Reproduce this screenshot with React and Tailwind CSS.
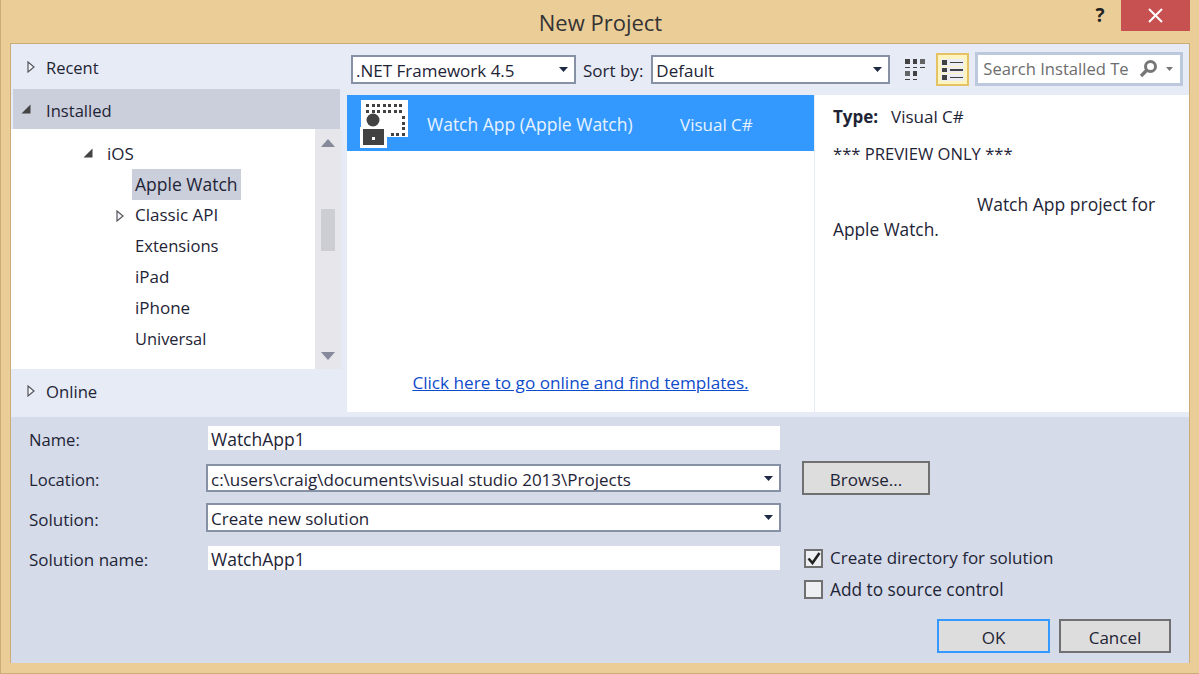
import React from "react";

const Expand = ({ className = "" }) => (
  <svg width="8" height="12" viewBox="0 0 8 12" className={className}>
    <path d="M1 1 L7 6 L1 11 Z" fill="#f4f6fb" stroke="#55565c" strokeWidth="1.2" />
  </svg>
);
const Collapse = ({ className = "" }) => (
  <svg width="10" height="10" viewBox="0 0 10 10" className={className}>
    <path d="M9.5 0.5 V9.5 H0.5 Z" fill="#444" />
  </svg>
);
const Caret = ({ className = "" }) => (
  <svg width="9" height="5" viewBox="0 0 9 5" className={className}>
    <path d="M0 0 H9 L4.5 5 Z" fill="#1e2a44" />
  </svg>
);

const TemplateIcon = () => {
  const xs = [6, 12, 17, 23, 28, 34, 39];
  const top = [];
  xs.forEach((x) => {
    top.push([x, 4]);
    top.push([x, 10]);
  });
  const rest = [[42, 16], [42, 22], [42, 27], [42, 33], [31, 33], [36, 33]];
  return (
    <svg width="48" height="48" viewBox="0 0 48 48" className="ml-[13px] mt-[2px] shrink-0">
      <rect x="1" y="0" width="47" height="37" fill="#fff" />
      {[...top, ...rest].map(([x, y], i) => (
        <rect key={i} x={x} y={y} width="3" height="3" fill="#424242" />
      ))}
      <rect x="0" y="27" width="27" height="21" fill="#fff" />
      <circle cx="13" cy="20" r="6.5" fill="#424242" />
      <rect x="3" y="29" width="21" height="16" fill="#424242" />
      <rect x="12" y="37" width="3" height="3" fill="#fff" />
    </svg>
  );
};

const GridIcon = () => (
  <svg width="22" height="23" viewBox="0 0 22 23" className="mr-[9px] shrink-0">
    <g fill="#424242">
      <rect x="0" y="0" width="5" height="5" />
      <rect x="8" y="0" width="4" height="5" />
      <rect x="15" y="0" width="5" height="5" opacity="0.8" />
      <rect x="0" y="12" width="5" height="5" opacity="0.8" />
      <rect x="8" y="12" width="4" height="5" />
      <rect x="0" y="8" width="5" height="1" />
      <rect x="8" y="8" width="4" height="1" />
      <rect x="15" y="8" width="5" height="1" />
      <rect x="0" y="20" width="5" height="1" />
      <rect x="8" y="20" width="4" height="1" />
    </g>
  </svg>
);

const ListIcon = () => (
  <svg width="23" height="22" viewBox="0 0 23 22">
    <rect x="0" y="0" width="23" height="7" fill="#eceef4" />
    <rect x="0" y="8" width="23" height="6" fill="#eceef4" />
    <rect x="0" y="15" width="23" height="7" fill="#eceef4" />
    <g fill="#424242">
      <rect x="1" y="1" width="5" height="5" />
      <rect x="1" y="9" width="5" height="4" />
      <rect x="1" y="16" width="5" height="5" />
      <rect x="9" y="3" width="13" height="1" />
      <rect x="9" y="10" width="13" height="2" />
      <rect x="9" y="18" width="13" height="1" />
    </g>
  </svg>
);

const Search = () => (
  <svg width="20" height="20" viewBox="0 0 20 20" className="shrink-0">
    <circle cx="12.5" cy="7.5" r="5" fill="none" stroke="#777" strokeWidth="3" />
    <path d="M8.5 11.5 L3 17" stroke="#777" strokeWidth="3.4" />
  </svg>
);

const TreeItem = ({ children, arrow, selected, textClass = "pb-[2px]" }) => (
  <div className="flex h-[31px] items-center">
    <div className="flex w-[32px] shrink-0 justify-center pl-[8px]">{arrow && <Expand />}</div>
    <div className={"flex h-[31px] items-center px-[3px] " + textClass + (selected ? " bg-[#cbcedb]" : "")}>{children}</div>
  </div>
);

const Select = ({ className = "", children, textClass = "" }) => (
  <div className={"flex items-center justify-between bg-white pl-[3px] pr-[6px] " + className}>
    <span className={"pt-[2px] " + textClass}>{children}</span>
    <Caret />
  </div>
);

const Btn = ({ children, className = "" }) => (
  <div className={"flex items-center justify-center border-2 bg-[#dddddd] pt-[2px] " + className}>{children}</div>
);

export default function App() {
  return (
    <div className="flex h-[674px] w-[1199px] flex-col overflow-hidden border-b border-l border-[#c9ac78] bg-[#ebcd98] font-['Open_Sans','Noto_Sans',sans-serif] text-[17px] leading-none text-[#1e2436]">
      {/* title bar */}
      <div className="flex h-[43px] shrink-0 items-start">
        <div className="flex h-[43px] flex-1 items-center justify-center pl-[121px] pt-[1px] text-[22px] text-[#333]">New Project</div>
        <div className="flex h-[31px] w-[42px] items-center justify-center text-[19px] font-bold text-[#222]">?</div>
        <div className="mr-[9px] flex h-[31px] w-[69px] items-center justify-center bg-[#c75050]">
          <svg width="15" height="15" viewBox="0 0 15 15">
            <path d="M1 1 L14 14 M14 1 L1 14" stroke="#fff" strokeWidth="2" />
          </svg>
        </div>
      </div>

      {/* body */}
      <div className="mx-[9px] flex h-[620px] flex-col border-t border-l border-r border-[#c9ac78]">
        <div className="flex h-[373px] shrink-0 bg-[#e6ebf5]">
          {/* left pane */}
          <div className="flex w-[336px] shrink-0 flex-col">
            <div className="flex h-[45px] items-center pl-[16px]">
              <Expand />
              <span className="ml-[11px] pt-[4px] text-[16.5px]">Recent</span>
            </div>
            <div className="ml-[2px] flex h-[40px] w-[327px] items-center bg-[#cbcedb] pl-[8px]">
              <Collapse />
              <span className="ml-[15px] pt-[4px] text-[16.6px]">Installed</span>
            </div>
            <div className="flex h-[240px]">
              <div className="w-[304px] bg-white pt-[8px]">
                <div className="flex h-[32px] items-center pl-[72px]">
                  <Collapse />
                  <span className="ml-[14px]">iOS</span>
                </div>
                <div className="pl-[89px]">
                  <TreeItem selected textClass="text-[17.5px]">Apple Watch</TreeItem>
                  <TreeItem arrow>Classic API</TreeItem>
                  <TreeItem textClass="text-[16.6px]">Extensions</TreeItem>
                  <TreeItem>iPad</TreeItem>
                  <TreeItem>iPhone</TreeItem>
                  <TreeItem textClass="text-[16.4px]">Universal</TreeItem>
                </div>
              </div>
              <div className="flex w-[26px] flex-col items-center bg-[#e6e6eb] pt-[10px]">
                <svg width="14" height="8" viewBox="0 0 14 8"><path d="M7 0 L14 8 H0 Z" fill="#868999" /></svg>
                <div className="ml-[-1px] mt-[62px] h-[42px] w-[14px] bg-[#cdced4]" />
                <svg width="14" height="8" viewBox="0 0 14 8" className="mt-[101px]"><path d="M0 0 H14 L7 8 Z" fill="#868999" /></svg>
              </div>
            </div>
            <div className="flex h-[44px] items-center pl-[16px]">
              <Expand />
              <span className="ml-[11px] pt-[3px] text-[16.7px]">Online</span>
            </div>
          </div>

          {/* right pane */}
          <div className="flex flex-1 flex-col">
            <div className="flex h-[51px] shrink-0 items-start pl-[4px] pt-[8px]">
              <Select className="mt-[3px] h-[29px] w-[225px] border-2 border-[#8691a5]">.NET Framework 4.5</Select>
              <span className="ml-[7px] mt-[10px]">Sort by:</span>
              <Select className="ml-[8px] mt-[3px] h-[29px] w-[239px] border-2 border-[#8691a5]">Default</Select>
              <div className="ml-[15px] mt-[7px]"><GridIcon /></div>
              <div className="mt-[1px] flex h-[33px] w-[33px] items-center justify-center border-2 border-[#e5c365] bg-[#fdf4bf]"><ListIcon /></div>
              <div className="ml-[6px] flex h-[34px] w-[208px] items-center border-[3px] border-[#bcc8db] bg-white pl-[5px] pr-[6px] text-[16.6px] text-[#6d6d6d]">
                <span className="w-[155px] whitespace-nowrap pt-[1px]">Search Installed Te</span>
                <Search />
                <svg width="7" height="4" viewBox="0 0 7 4" className="ml-[8px] shrink-0"><path d="M0 0 H7 L3.5 4 Z" fill="#777" /></svg>
              </div>
            </div>
            <div className="flex h-[317px] shrink-0 bg-white">
              <div className="flex w-[468px] shrink-0 flex-col border-r border-[#e6ebf5]">
                <div className="flex h-[56px] items-center bg-[#3399ff] text-[#e8f3ff]">
                  <TemplateIcon />
                  <span className="ml-[19px] w-[253px] pt-[4px] text-[17.5px]">Watch App (Apple Watch)</span>
                  <span className="pt-[2px]">Visual C#</span>
                </div>
                <div className="flex flex-1 items-end justify-center pb-[21px]">
                  <span className="text-[17.15px] text-[#0f4ccb] underline">Click here to go online and find templates.</span>
                </div>
              </div>
              <div className="flex-1 pl-[18px] pt-[11px]">
                <div className="flex h-[20px] items-center">
                  <span className="w-[58px] font-bold">Type:</span>
                  <span>Visual C#</span>
                </div>
                <div className="mt-[20px] h-[20px] text-[16.6px]">*** PREVIEW ONLY ***</div>
                <div className="mt-[30px] h-[20px] whitespace-nowrap pl-[144px] text-[17.5px]">Watch App project for</div>
                <div className="mt-[5px] text-[17.3px]">Apple Watch.</div>
              </div>
            </div>
          </div>
        </div>

        {/* bottom form */}
        <div className="flex flex-1 flex-col bg-[#d5dbe9] pl-[18px] pt-[9px]">
          <div className="flex h-[24px] items-center">
            <span className="w-[179px] pt-[4px] text-[16.6px]">Name:</span>
            <div className="flex h-[24px] w-[572px] items-center bg-white pl-[3px] pt-[3px] text-[17.5px]">WatchApp1</div>
          </div>
          <div className="mt-[11px] flex h-[34px] items-center">
            <span className="w-[177px] pt-[4px] text-[16.6px]">Location:</span>
            <Select className="h-[28px] w-[575px] border-2 border-[#8691a5]">c:\users\craig\documents\visual studio 2013\Projects</Select>
            <Btn className="ml-[21px] h-[34px] w-[128px] border-[#707070]">Browse...</Btn>
          </div>
          <div className="mt-[8px] flex h-[29px] items-center">
            <span className="w-[177px] pt-[3px]">Solution:</span>
            <Select className="h-[29px] w-[575px] border-2 border-[#8691a5]">Create new solution</Select>
          </div>
          <div className="mt-[14px] flex h-[24px] items-center">
            <span className="w-[179px] pt-[2px]">Solution name:</span>
            <div className="flex h-[24px] w-[572px] items-center bg-white pl-[3px] pt-[3px] text-[17.5px]">WatchApp1</div>
            <div className="ml-[24px] flex h-[19px] w-[19px] items-center justify-center border-2 border-[#707070] bg-[#eeeff2]">
              <svg width="14" height="13" viewBox="0 0 14 13"><path d="M1.5 6.5 L5.5 11 L12.5 1" fill="none" stroke="#222" strokeWidth="2.6" /></svg>
            </div>
            <span className="ml-[7px] pb-[1px]">Create directory for solution</span>
          </div>
          <div className="mt-[10px] flex h-[19px] items-center pl-[775px]">
            <div className="h-[19px] w-[19px] border-2 border-[#707070] bg-[#eeeff2]" />
            <span className="ml-[7px] whitespace-nowrap text-[17.3px]">Add to source control</span>
          </div>
          <div className="mt-[20px] flex h-[34px] items-center pl-[908px]">
            <Btn className="h-[34px] w-[113px] border-[#3399ff]">OK</Btn>
            <Btn className="ml-[9px] h-[34px] w-[112px] border-[#707070]">Cancel</Btn>
          </div>
        </div>
      </div>
    </div>
  );
}
